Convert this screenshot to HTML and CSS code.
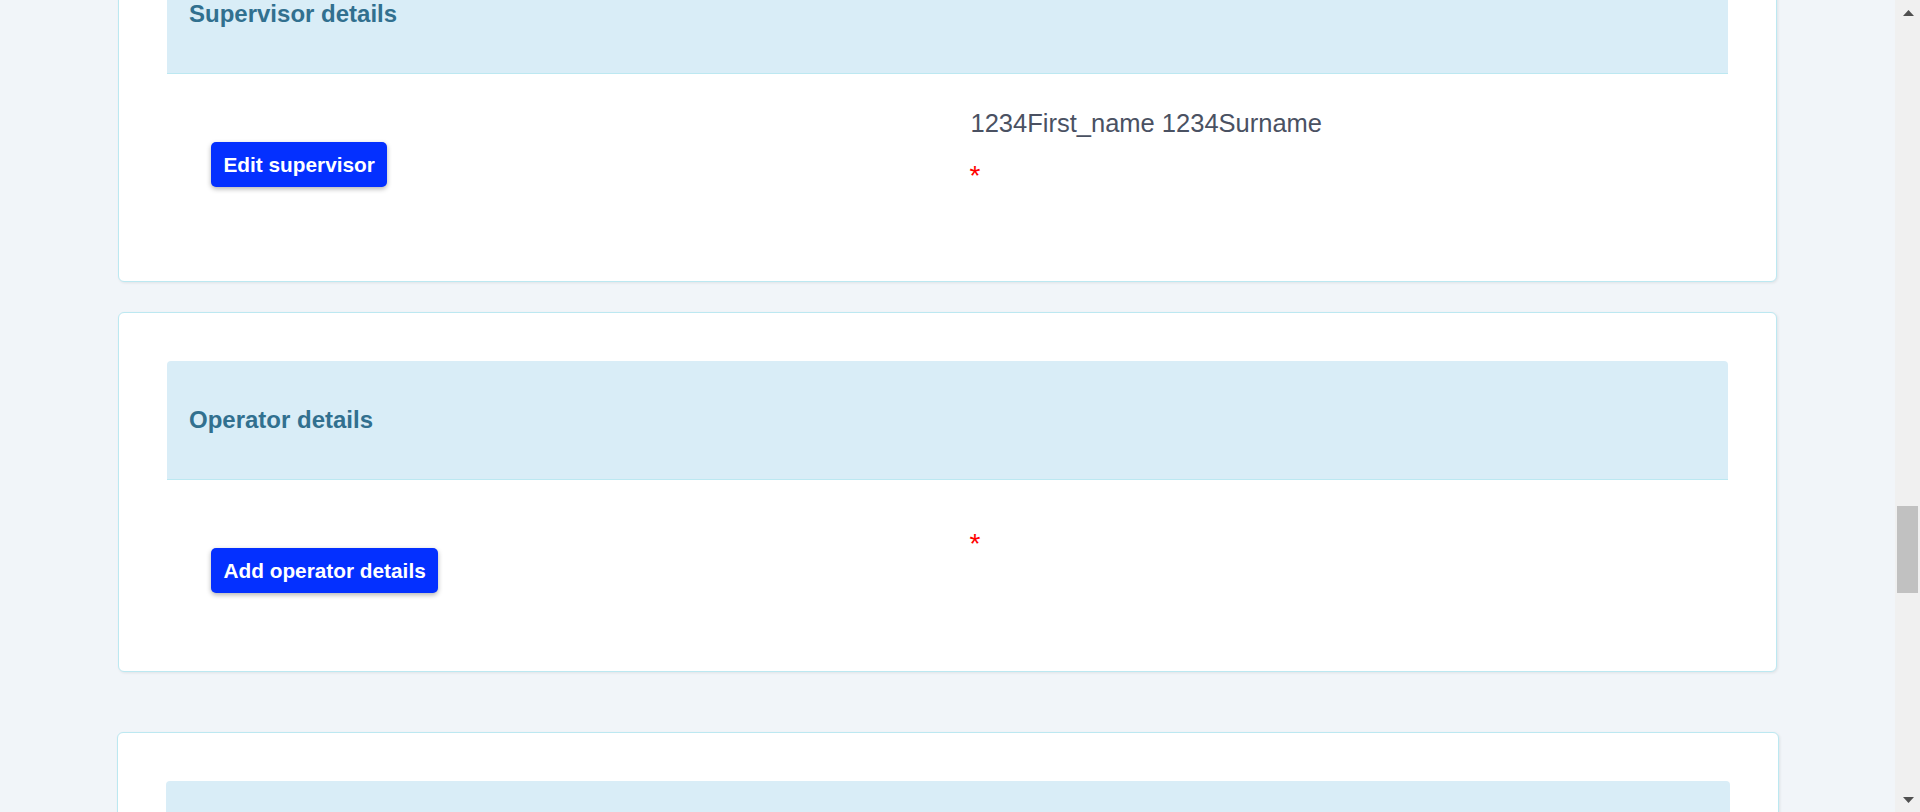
FILE: index.html
```html
<!DOCTYPE html>
<html lang="en">
<head>
<meta charset="utf-8">
<title>Details</title>
<link rel="stylesheet" href="styles.css">
</head>
<body>
<div class="app">
  <main class="main">
    <div class="stack">
      <section class="group">
        <div class="card">
          <div class="card-head"><h3 class="card-title">Supervisor details</h3></div>
          <div class="card-body">
            <div class="col-action"><button class="btn">Edit supervisor</button></div>
            <div class="col-value">
              <div class="value"><p class="value-text">1234First_name 1234Surname</p></div>
              <div class="required">*</div>
            </div>
          </div>
        </div>
        <div class="card">
          <div class="card-head"><h3 class="card-title">Operator details</h3></div>
          <div class="card-body">
            <div class="col-action"><button class="btn">Add operator details</button></div>
            <div class="col-value">
              <div class="value"></div>
              <div class="required">*</div>
            </div>
          </div>
        </div>
      </section>
      <section class="group group-next">
        <div class="card card-wide">
          <div class="card-head card-head-tall"></div>
        </div>
      </section>
    </div>
  </main>
  <div class="scrollbar">
    <div class="sb-btn">
      <svg width="11" height="6" viewBox="0 0 11 6"><polygon points="5.5,0 11,6 0,6" fill="#505050"/></svg>
    </div>
    <div class="sb-track"><div class="sb-thumb"></div></div>
    <div class="sb-btn">
      <svg width="11" height="6" viewBox="0 0 11 6"><polygon points="0,0 11,0 5.5,6" fill="#505050"/></svg>
    </div>
  </div>
</div>
</body>
</html>
```
FILE: styles.css
```css
* { box-sizing: border-box; }
html, body { margin: 0; padding: 0; height: 100%; }
body {
  font-family: "Liberation Sans", Arial, sans-serif;
  background: #f1f5f9;
  overflow: hidden;
}
.app {
  display: flex;
  height: 812px;
}
.main {
  flex: 1;
  overflow: hidden;
  padding: 0 118px;
}
.stack {
  margin-top: -94px;
}
.group {
  display: flex;
  flex-direction: column;
  gap: 30px;
}
.group-next {
  margin-top: 60px;
}
.card {
  background: #fff;
  border: 1px solid #bce8f1;
  border-radius: 6px;
  padding: 48px 48px 48px;
  box-shadow: 1px 1px 3px rgba(0, 0, 0, 0.08);
}
.card-wide {
  margin: 0 -2px 0 -1px;
}
.card-head {
  background: #d9edf7;
  border-bottom: 1px solid #bce8f1;
  border-radius: 4px 4px 0 0;
  padding: 45px 22px;
}
.card-head-tall {
  height: 119px;
}
.card-title {
  margin: 0;
  font-size: 24px;
  line-height: 28px;
  font-weight: bold;
  color: #31708f;
}
.card-body {
  display: grid;
  grid-template-columns: 1fr 1fr;
  align-items: start;
  padding-bottom: 30px;
}
.col-action {
  padding: 68px 0 0 44px;
}
.col-value {
  padding: 34px 0 0 22px;
}
.btn {
  font-family: "Liberation Sans", Arial, sans-serif;
  font-size: 20.8px;
  line-height: 25px;
  font-weight: bold;
  color: #fff;
  background: #0430ff;
  border: none;
  border-radius: 5px;
  padding: 10px 12.5px;
  box-shadow: 0 2px 5px rgba(0, 0, 0, 0.3);
  cursor: pointer;
}
.value {
  padding-bottom: 15px;
}
.value-text {
  margin: 0 0 8px 1px;
  font-size: 25.5px;
  line-height: 30px;
  color: #4a5162;
}
.required {
  font-size: 28px;
  line-height: 30px;
  color: #ff0000;
  margin-bottom: 12px;
}
.scrollbar {
  width: 25px;
  flex: none;
  background: #f0f0f0;
  display: flex;
  flex-direction: column;
}
.sb-btn {
  height: 25px;
  display: flex;
  align-items: center;
  justify-content: center;
  padding-left: 1px;
}
.sb-track {
  flex: 1;
  padding: 0 2px;
}
.sb-thumb {
  margin-top: 481px;
  height: 87px;
  background: #c1c1c1;
}
```
